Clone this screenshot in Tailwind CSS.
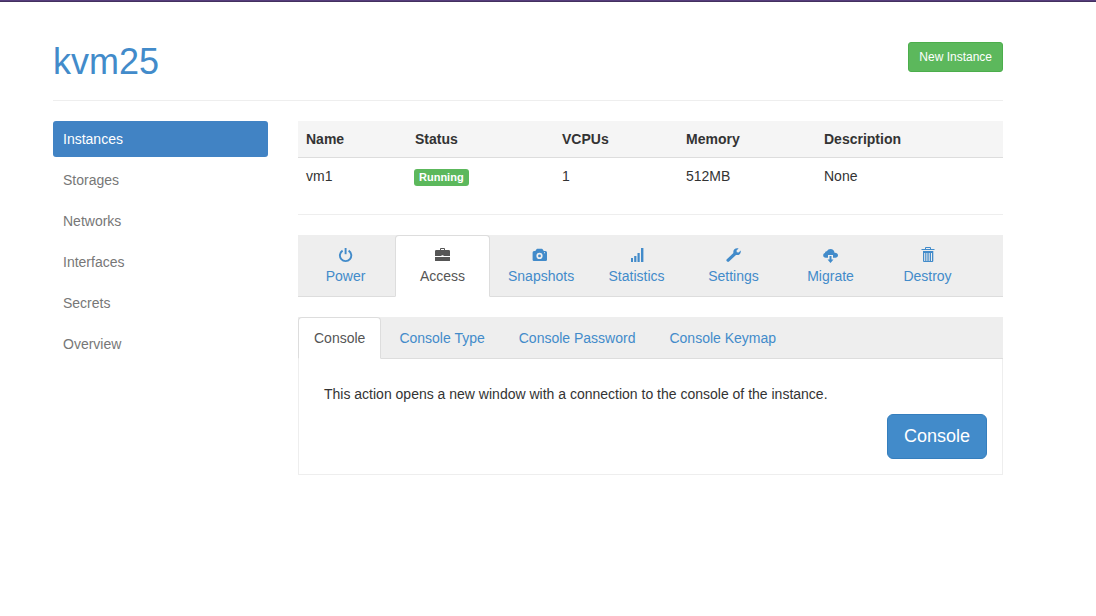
<!DOCTYPE html>
<html lang="en">
<head>
<meta charset="utf-8">
<title>kvm25 - Instances</title>
<script src="https://cdn.jsdelivr.net/npm/@tailwindcss/browser@4"></script>
</head>
<body class="bg-white font-['Liberation_Sans',Arial,sans-serif] text-sm leading-5 text-[#333]">
<div class="h-0.5 border-b border-[#43305f] bg-[#563d7c]"></div>
<div class="pt-10 pr-[93px] pl-[53px]">
  <header class="flex items-start justify-between border-b border-[#eee] pb-[19px]">
    <h1 class="text-4xl leading-[39px] text-[#428bca]"><a href="#">kvm25</a></h1>
    <button type="button" class="h-[30px] rounded-[3px] border border-[#4cae4c] bg-[#5cb85c] px-2.5 text-xs text-white">New Instance</button>
  </header>
  <div class="mt-5 flex gap-[30px]">
    <nav class="flex w-[215px] shrink-0 flex-col gap-[5px] text-[#777]" aria-label="Host">
      <a href="#" class="rounded-[3px] bg-[#4183c4] px-2.5 py-2 text-white" aria-current="page">Instances</a>
      <a href="#" class="px-2.5 py-2">Storages</a>
      <a href="#" class="px-2.5 py-2">Networks</a>
      <a href="#" class="px-2.5 py-2">Interfaces</a>
      <a href="#" class="px-2.5 py-2">Secrets</a>
      <a href="#" class="px-2.5 py-2">Overview</a>
    </nav>
    <main class="min-w-0 flex-1">
      <table class="w-full table-fixed text-left">
        <thead class="bg-[#f5f5f5]">
          <tr class="border-b border-[#ddd]">
            <th class="w-[109px] p-2">Name</th>
            <th class="w-[147px] p-2">Status</th>
            <th class="w-[124px] p-2">VCPUs</th>
            <th class="w-[138px] p-2">Memory</th>
            <th class="p-2">Description</th>
          </tr>
        </thead>
        <tbody>
          <tr>
            <td class="p-2">vm1</td>
            <td class="px-[7px] py-2"><span class="mt-[3px] block w-fit rounded-[3px] bg-[#5cb85c] px-[5px] text-[11px] leading-[17px] font-bold text-white">Running</span></td>
            <td class="p-2">1</td>
            <td class="p-2">512MB</td>
            <td class="p-2">None</td>
          </tr>
        </tbody>
      </table>
      <hr class="mt-5 border-[#eee]">

      <nav class="mt-5 flex gap-0.5 border-b border-[#ddd] bg-[#eee] text-[#428bca]" aria-label="Instance actions">
        <a href="#" class="-mb-px flex w-[95px] flex-col items-center border border-transparent px-[15px] py-2.5">
          <span class="h-5 pt-0.5"><svg class="block size-[15px] overflow-visible" viewBox="0 0 15 15" fill="none" stroke="currentColor" stroke-width="1.9"><path d="M4.6 2.6a5.7 5.7 0 1 0 6 0"/><path d="M7.6 0v6.2"/></svg></span>
          <span>Power</span>
        </a>
        <a href="#" class="-mb-px flex w-[95px] flex-col items-center rounded-t border border-[#ddd] border-b-transparent bg-white px-[15px] py-2.5 text-[#555]" aria-current="page">
          <span class="h-5 pt-0.5"><svg class="block size-[15px] overflow-visible" viewBox="0 0 15 15" fill="currentColor"><path fill-rule="evenodd" d="M5 2V1q0-1 1-1h3q1 0 1 1v1h3.800q1.200 0 1.200 1.200V8H8.500V7.300h-2V8H0V3.200Q0 2 1.200 2zM6 2h3V1H6z"/><path d="M0 9h15v3.500q0 .5-.5.500H.5Q0 13 0 12.500z"/></svg></span>
          <span>Access</span>
        </a>
        <a href="#" class="-mb-px flex w-[95px] flex-col border border-transparent px-[15px] py-2.5">
          <span class="h-5 self-center pt-0.5"><svg class="block size-[15px] overflow-visible" viewBox="0 0 15 15" fill="currentColor"><path fill-rule="evenodd" d="M5.200.8h4.600q.6 0 1 .7l1 1.500h1.700q1.500 0 1.500 1.500v7.200q0 1.300-1.300 1.300H1.900Q.6 13 .6 11.700V4.500Q.6 3 2.100 3h1.200l1-1.500q.4-.7.900-.7zM7.500 4.800a3.100 3.100 0 1 0 0 6.200 3.100 3.100 0 0 0 0-6.200zM12 4.300v1h1v-1z"/><circle cx="7.500" cy="7.900" r="1.400"/></svg></span>
          <span>Snapshots</span>
        </a>
        <a href="#" class="-mb-px flex w-[95px] flex-col items-center border border-transparent px-[15px] py-2.5">
          <span class="h-5 pt-0.5"><svg class="block size-[15px] overflow-visible" viewBox="0 0 15 15" fill="currentColor"><path d="M2 10h2v4H2zM5.200 8h2.200v6H5.200zM8.500 5h2.200v9H8.500zM12 0h2.400v14H12z"/></svg></span>
          <span>Statistics</span>
        </a>
        <a href="#" class="-mb-px flex w-[95px] flex-col items-center border border-transparent px-[15px] py-2.5">
          <span class="h-5 pt-0.5"><svg class="block size-[15px] overflow-visible" viewBox="0 0 15 15" fill="currentColor"><path d="M12.600.4 10.500 2.500l.3 1.800 1.800.3 2.100-2c.3 1.600-.1 2.800-1 3.600-1 .9-2.300 1.100-3.700.7L3 13.500q-.9.8-1.800 0l-.6-.6q-.6-.9.200-1.700L7.400 5.100C7.100 3.600 7.400 2.300 8.400 1.300 9.500.2 11 .0 12.600.4z"/></svg></span>
          <span>Settings</span>
        </a>
        <a href="#" class="-mb-px flex w-[95px] flex-col items-center border border-transparent px-[15px] py-2.5">
          <span class="h-5 pt-0.5"><svg class="block size-[15px] overflow-visible" viewBox="0 0 15 15" fill="currentColor"><path d="M2.700 9.700C1.200 9.600.2 8.700.2 7.400c0-1.200.7-2 1.800-2.300C2 3.900 2.800 3.200 4 3.300 4.700 1.800 6 1 7.500 1c2.200 0 3.900 1.600 4 3.700 2-.2 3.500 1 3.500 2.600 0 1.400-1.100 2.400-2.700 2.400H10V7H5v2.700z"/><path d="M6.500 8h2v3.500h2L7.500 15l-3-3.500h2z"/></svg></span>
          <span>Migrate</span>
        </a>
        <a href="#" class="-mb-px flex w-[95px] flex-col items-center border border-transparent px-[15px] py-2.5">
          <span class="h-5 pt-0.5"><svg class="block size-[15px] overflow-visible" viewBox="0 0 15 15" fill="currentColor"><path fill-rule="evenodd" d="M5 1V0q0-1 1-1h4q1 0 1 1v1h3.500v1h-13V1zM6 1h4V0H6zM3 3h10.300v10q0 1-1 1H4q-1 0-1-1zM4.200 5v8h1V5zM6.400 5v8h1V5zM8.700 5v8h1V5zM11 5v8h1V5z"/></svg></span>
          <span>Destroy</span>
        </a>
      </nav>

      <nav class="mt-5 flex gap-0.5 border-b border-[#ddd] bg-[#eee] text-[#428bca]" aria-label="Access options">
        <a href="#" class="-mb-px rounded-t border border-[#ddd] border-b-white bg-white px-[15px] py-2.5 text-[#555]" aria-current="page">Console</a>
        <a href="#" class="-mb-px border border-transparent px-[15px] py-2.5">Console Type</a>
        <a href="#" class="-mb-px border border-transparent px-[15px] py-2.5">Console Password</a>
        <a href="#" class="-mb-px border border-transparent px-[15px] py-2.5">Console Keymap</a>
      </nav>
      <section class="flex flex-col gap-2.5 border border-t-0 border-[#eee] px-[15px] pt-[25px] pb-[15px]">
        <p class="px-2.5">This action opens a new window with a connection to the console of the instance.</p>
        <button type="button" class="self-end rounded-md border border-[#357ebd] bg-[#428bca] px-4 py-2.5 text-lg leading-[23px] text-white">Console</button>
      </section>
    </main>
  </div>
</div>
</body>
</html>
